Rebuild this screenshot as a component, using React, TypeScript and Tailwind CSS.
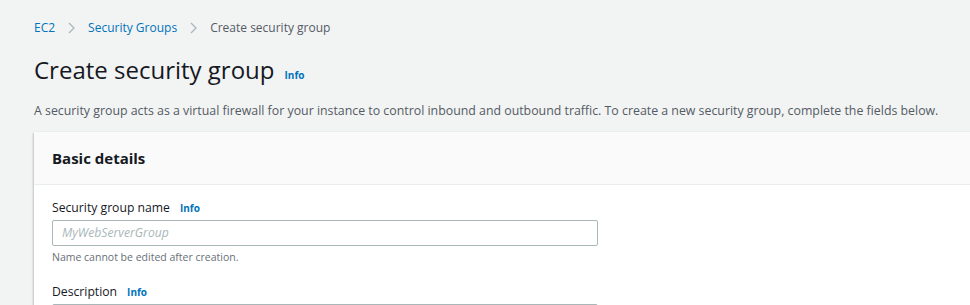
const Info = ({ className = "" }: { className?: string }) => (
  <span className={"font-bold text-[#0073bb] text-[10px] " + className}>Info</span>
);

const Chevron = () => (
  <svg width="9" height="14" viewBox="0 0 9 14" className="mx-[12px]">
    <path d="M2 2l5 5-5 5" fill="none" stroke="#aab7b8" strokeWidth="1.3" />
  </svg>
);

export default function App() {
  return (
    <div
      className="h-[305px] w-[970px] overflow-hidden bg-[#f2f3f3] pl-[34px] text-[#16191f]"
      style={{ fontFamily: '"Open Sans", "Noto Sans", sans-serif' }}
    >
      <div className="flex items-center pt-[18px] text-[12px] h-[37px]">
        <span className="text-[#0073bb]">EC2</span>
        <Chevron />
        <span className="text-[#0073bb]">Security Groups</span>
        <Chevron />
        <span className="text-[#545b64]">Create security group</span>
      </div>

      <div className="mt-[16px] flex items-baseline">
        <h1 className="text-[24px] leading-[34px] text-[#16191f]">Create security group</h1>
        <Info className="ml-[10px]" />
      </div>

      <p className="mt-[15px] text-[12.35px] leading-[18px] text-[#545b64] whitespace-nowrap">
        A security group acts as a virtual firewall for your instance to control inbound and outbound traffic. To create a new security group, complete the fields below.
      </p>

      <div className="mt-[12px] -mr-4 bg-white shadow-[0_1px_2px_rgba(0,28,36,0.25),-1px_1px_2px_rgba(0,28,36,0.12)]">
        <div className="h-[53px] flex items-center px-[18px] bg-[#fafafa] border-b border-[#eaeded]">
          <h2 className="text-[15px] font-bold text-[#16191f]">Basic details</h2>
        </div>
        <div className="px-[18px] pt-[14px]">
          <div className="flex items-baseline text-[12.2px] leading-[18px]">
            <span>Security group name</span>
            <Info className="ml-[10px]" />
          </div>
          <div className="mt-[3px] w-[546px] h-[26px] border border-[#aab7b8] rounded-[2px] flex items-center px-[9px]">
            <span className="italic text-[12.2px] text-[#aab7b8]">MyWebServerGroup</span>
          </div>
          <div className="mt-[3px] text-[10.5px] leading-[16px] text-[#687078]">Name cannot be edited after creation.</div>
          <div className="mt-[18px] flex items-baseline text-[12.2px] leading-[18px]">
            <span>Description</span>
            <Info className="ml-[10px]" />
          </div>
          <div className="mt-[3px] w-[546px] h-[26px] border border-[#aab7b8] rounded-[2px]" />
        </div>
      </div>
    </div>
  );
}
